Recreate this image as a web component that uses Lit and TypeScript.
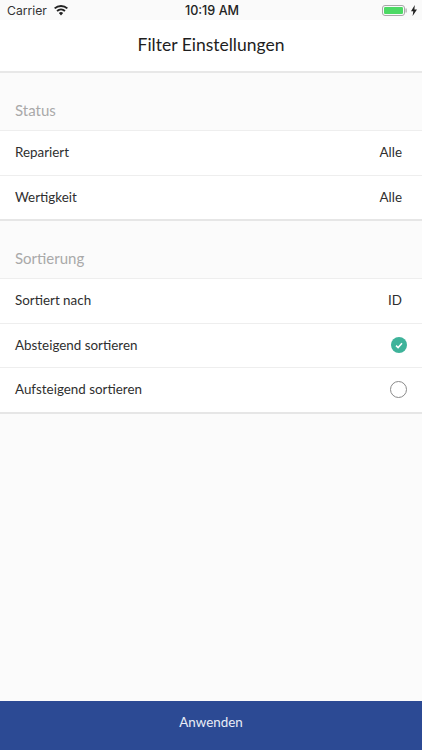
import { LitElement, html, css } from "lit";
import { customElement } from "lit/decorators.js";

@customElement("app-root")
export class AppRoot extends LitElement {
  static styles = css`
    :host { display: flex; flex-direction: column; height: 750px; width: 422px; background: #fbfbfb; font-family: "Lato", "Open Sans", sans-serif; color: #2b2b2b; overflow: hidden; }
    .status { height: 20px; display: grid; grid-template-columns: 1fr auto 1fr; align-items: center; padding: 0 5px 0 7px; font-family: "Inter", "Liberation Sans", sans-serif; font-size: 12.2px; color: #333; background: #fafafa; }
    .left { display: flex; align-items: center; gap: 7px; }
    .time { font-weight: 500; font-size: 12.6px; color: #222; }
    .right { display: flex; justify-content: flex-end; align-items: center; gap: 4px; }
    .nav { height: 49px; box-sizing: content-box; background: #fff; display: flex; align-items: center; justify-content: center; padding-bottom: 2px; font-size: 17.5px; color: #1e1e1e; border-bottom: 2px solid #e8e8e8; }
    .content { flex: 1; }
    .head { height: 57px; box-sizing: border-box; padding: 27px 15px 0; font-size: 15px; line-height: 20px; color: #a9a9a9; }
    .head.second { height: 56.6px; }
    .group { background: #fff; border-top: 1px solid #eeeeee; border-bottom: 2px solid #e6e6e6; }
    .row { height: 43.7px; box-sizing: content-box; display: flex; align-items: center; justify-content: space-between; padding: 0 15px; font-size: 13.4px; color: #2f2f2f; }
    .row + .row { border-top: 1px solid #eeeeee; }
    .label { padding-bottom: 2px; }
    .val { padding-bottom: 2px; margin-right: 5px; }
    .check { width: 16px; height: 16px; margin-bottom: 1px; border-radius: 50%; background: #3eb39a; display: flex; align-items: center; justify-content: center; }
    .radio { width: 15px; height: 15px; margin-bottom: 1px; border-radius: 50%; border: 1px solid #8a8a8a; }
    .footer { height: 49px; box-sizing: border-box; padding-bottom: 8px; background: #2c4a94; color: #e9edf7; display: flex; align-items: center; justify-content: center; font-size: 13.4px; }
  `;

  render() {
    return html`
      <div class="status">
        <div class="left">
          <span>Carrier</span>
          <svg width="14" height="11" viewBox="0 0 15 11"><path fill="#222" d="M7.5 10.8 5.2 8.2a3.4 3.4 0 0 1 4.6 0zM3.9 6.8 2.6 5.3a7.4 7.4 0 0 1 9.8 0l-1.3 1.5a5.4 5.4 0 0 0-7.2 0zM1.4 4 0 2.6a11.2 11.2 0 0 1 15 0L13.6 4A9.2 9.2 0 0 0 1.4 4z"/></svg>
        </div>
        <span class="time">10:19 AM</span>
        <div class="right">
          <svg width="25" height="11" viewBox="0 0 25 11"><rect x=".5" y=".5" width="22" height="10" rx="2.5" fill="none" stroke="#a8a8a8"/><rect x="2" y="2" width="19" height="7" rx="1.2" fill="#4cd964"/><rect x="23.5" y="3.5" width="1.2" height="4" fill="#a8a8a8"/></svg>
          <svg width="6" height="11" viewBox="0 0 6 11"><path fill="#222" d="M3.8 0 0 6.2h2.3L1.6 11 6 4.4H3.4z"/></svg>
        </div>
      </div>
      <div class="nav">Filter Einstellungen</div>
      <div class="content">
        <div class="head">Status</div>
        <div class="group">
          <div class="row"><span class="label">Repariert</span><span class="val">Alle</span></div>
          <div class="row"><span class="label">Wertigkeit</span><span class="val">Alle</span></div>
        </div>
        <div class="head second">Sortierung</div>
        <div class="group">
          <div class="row"><span class="label">Sortiert nach</span><span class="val">ID</span></div>
          <div class="row"><span class="label">Absteigend sortieren</span>
            <span class="check"><svg width="8" height="7" viewBox="0 0 8 7"><path d="M1 3.6 3.1 5.6 7 1.2" fill="none" stroke="#fff" stroke-width="1.5"/></svg></span></div>
          <div class="row"><span class="label">Aufsteigend sortieren</span><span class="radio"></span></div>
        </div>
      </div>
      <div class="footer">Anwenden</div>
    `;
  }
}
